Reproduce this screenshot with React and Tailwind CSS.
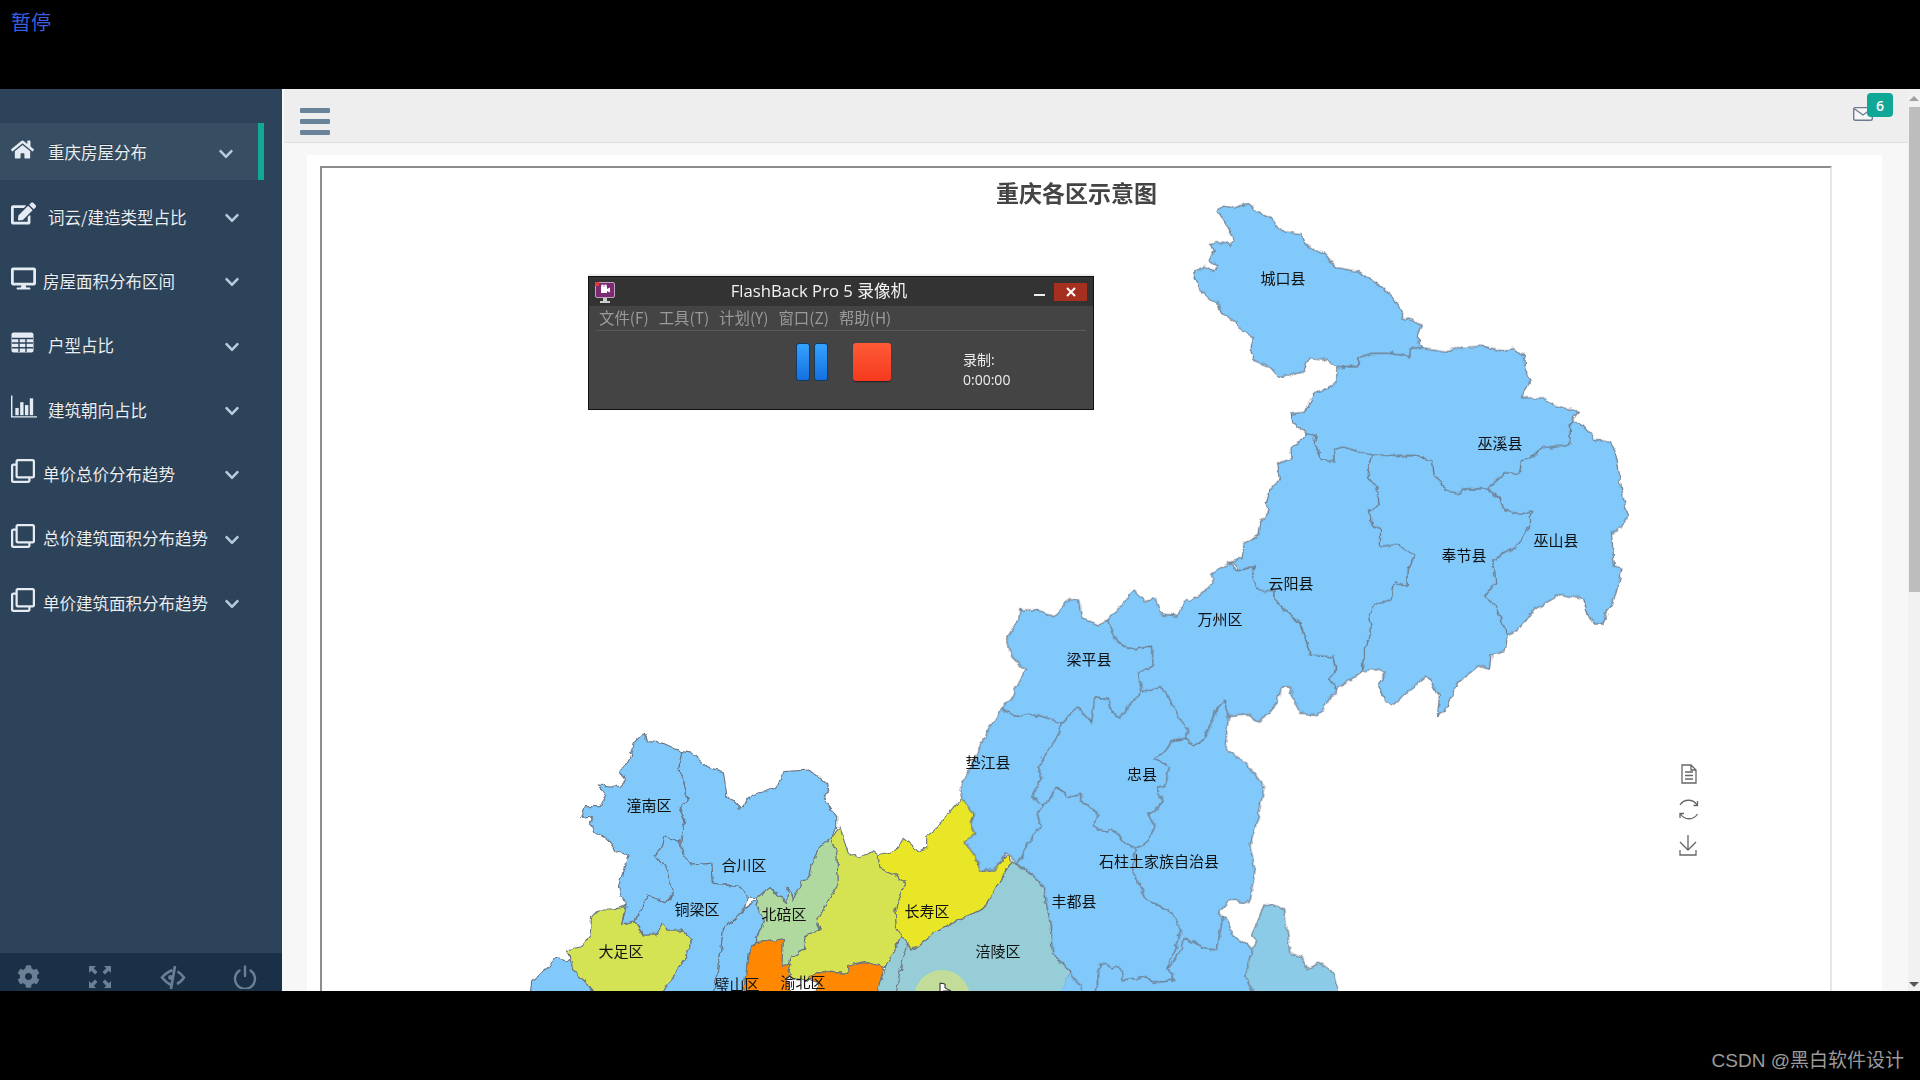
import React from "react";
import { FaHome, FaEdit, FaDesktop, FaRegClone, FaChevronDown, FaCog } from "react-icons/fa";

// Traced in 2.8x crop space
const Z5 = [
  ["#81c8fb","330,90 345,72 375,78 395,72 415,68 445,90 475,105 495,130 515,145 565,150 575,180 600,195 625,205 660,245 720,255 775,290 820,330 850,375 850,385 900,405 888,435 903,470 870,470 868,495 810,485 760,485 728,497 725,522 660,522 635,505 585,500 570,535 530,548 500,550 480,525 430,505 420,465 430,440 385,415 380,395 345,380 335,350 305,330 280,310 262,262 290,240 320,258 328,240 305,222 320,200 312,180 340,175 365,183 378,170 360,135 345,110"],
  ["#81c8fb","868,470 903,472 970,482 990,470 1075,465 1120,478 1160,472 1185,488 1190,530 1205,568 1180,610 1240,610 1270,630 1340,648 1318,678 1315,740 1240,750 1205,780 1180,785 1175,822 1135,820 1085,865 1030,865 1000,878 970,868 935,825 930,785 880,772 760,770 680,748 658,755 658,790 620,780 600,735 605,715 575,708 540,680 535,655 575,650 600,595 640,585 660,565 660,525 725,522 728,497 760,485 810,485 868,495"],
  ["#81c8fb","575,708 605,715 600,735 620,780 658,790 658,755 680,748 760,770 748,825 775,860 782,910 755,925 760,965 785,975 785,1025 835,1020 882,1050 860,1095 860,1140 825,1128 815,1175 765,1188 755,1215 760,1270 738,1320 735,1375 665,1425 640,1400 663,1370 655,1335 590,1330 560,1240 520,1205 490,1175 490,1150 445,1148 425,1105 433,1080 385,1095 380,1078 358,1072 395,1060 400,1020 445,995 450,955 472,930 465,910 475,870 505,835 497,795 535,780 535,750 560,735"],
  ["#81c8fb","760,770 880,772 930,785 935,825 970,868 1000,878 1030,865 1085,865 1120,890 1130,920 1170,935 1205,930 1205,970 1165,1025 1100,1065 1105,1130 1080,1165 1105,1190 1130,1245 1140,1275 1135,1320 1095,1330 1090,1370 1060,1360 1000,1410 965,1490 945,1500 950,1445 915,1388 870,1425 818,1472 800,1460 780,1410 800,1380 770,1370 735,1375 738,1320 760,1270 755,1215 765,1188 815,1175 825,1128 860,1140 860,1095 882,1050 835,1020 785,1025 785,975 760,965 755,925 782,910 775,860 748,825"],
  ["#81c8fb","1318,678 1345,680 1385,725 1430,735 1445,770 1455,830 1465,890 1478,940 1465,970 1432,990 1440,1080 1462,1090 1440,1170 1405,1243 1385,1243 1365,1215 1355,1175 1290,1160 1220,1200 1170,1260 1140,1275 1130,1245 1105,1190 1080,1165 1105,1130 1100,1065 1165,1025 1205,970 1205,930 1170,935 1130,920 1120,890 1085,865 1135,820 1175,822 1180,785 1205,780 1240,750 1315,740"],
];

// Traced in 3x crop space, origin (960,540)
const Z6 = [
  ["#81c8fb","330,1295 640,1290 855,1310 885,1365 300,1365", true],
  ["#81c8fb","443,240 480,200 522,152 550,185 585,172 600,220 650,228 680,175 690,185 755,135 755,105 805,70 830,95 880,78 895,145 945,150 945,179 977,211 1020,249 1052,345 1122,350 1130,388 1106,420 1132,447 1074,527 1020,522 988,441 961,441 950,490 902,546 854,522 806,527 795,480 775,495 730,600 700,618 680,595 682,570 645,510 625,470 600,440 545,455 535,400 578,375 578,322 500,328 460,290"],
  ["#81c8fb","443,240 460,290 500,328 578,322 578,375 535,400 545,455 480,530 450,515 445,475 405,472 395,548 350,503 305,550 280,540 215,520 170,532 125,505 150,480 195,390 155,350 137,300 175,240 180,210 220,210 285,230 330,175 355,180 365,235 420,255"],
  ["#81c8fb","125,505 170,532 215,520 280,540 305,550 290,590 235,680 245,710 218,770 250,795 232,820 240,860 205,910 172,978 155,950 140,940 105,990 60,990 45,950 15,905 45,880 30,850 40,820 0,770 10,720 50,650 85,570"],
  ["#81c8fb","305,550 350,503 395,548 405,472 445,475 450,515 480,530 545,455 600,440 625,470 645,510 682,570 680,595 640,600 610,640 582,655 630,680 610,740 590,745 610,785 565,825 585,860 560,910 525,925 490,905 455,865 440,880 400,860 417,825 365,785 365,760 325,770 290,740 270,775 250,795 218,770 245,710 235,680 290,590"],
  ["#81c8fb","680,595 700,618 730,600 775,495 795,480 806,527 795,625 860,670 912,740 895,830 870,915 885,990 870,1085 810,1080 775,1120 788,1130 772,1228 745,1228 675,1195 645,1260 620,1285 665,1170 630,1115 560,1080 520,1000 525,925 560,910 585,860 565,825 610,785 590,745 610,740 630,680 582,655 610,640 640,600"],
  ["#81c8fb","172,978 205,910 240,860 232,820 250,795 270,775 290,740 325,770 365,760 365,785 417,825 400,860 440,880 455,865 490,905 525,925 520,1000 560,1080 630,1115 665,1170 620,1285 640,1300 640,1320 580,1330 560,1310 490,1320 480,1285 420,1272 408,1365 375,1365 330,1295 278,1240 270,1145 250,1040 205,995"],
  ["#81c8fb","408,1365 420,1272 480,1285 490,1320 560,1310 580,1330 640,1320 640,1300 620,1285 645,1260 675,1195 745,1228 772,1228 788,1130 800,1140 820,1190 865,1215 880,1240 855,1310 885,1365"],
  ["#8ccbe8","880,1225 890,1200 875,1185 910,1100 940,1092 970,1105 980,1160 990,1240 1025,1250 1045,1290 1080,1270 1120,1300 1135,1365 885,1365 855,1310 870,1260"],
];

// Traced in 3x crop space, origin (520,720)
const Z7 = [
  ["#97cdd6","1475,425 1525,455 1570,500 1590,605 1598,700 1650,755 1625,825 1060,825 1100,740 1150,640 1175,690 1240,640 1300,610 1395,560 1420,520 1445,470"],
  ["#81c8fb","30,825 35,785 75,750 105,712 160,725 205,795 225,825"],
  ["#d3e352","315,557 305,615 345,605 370,645 405,645 425,610 440,630 485,630 515,660 500,710 420,825 225,825 205,795 160,750 140,690 185,680 210,650 215,590 235,570 280,570"],
  ["#81c8fb","370,40 385,65 430,70 485,95 475,155 490,180 505,240 480,265 495,300 485,340 480,365 435,350 425,385 405,405 440,450 460,515 440,550 385,525 345,605 305,615 318,560 295,500 325,405 290,395 265,360 225,335 210,310 220,290 185,295 195,260 240,260 260,225 235,195 300,200 315,185 300,150 325,125 340,70"],
  ["#81c8fb","485,95 515,100 560,140 610,155 620,225 660,265 695,225 770,205 790,155 870,150 920,190 925,220 910,230 950,290 950,320 935,355 900,380 880,420 870,470 850,480 820,540 805,500 800,545 780,530 750,500 710,535 685,530 655,500 580,490 575,430 515,435 485,395 485,340 495,300 480,265 505,240 490,180 475,155"],
  ["#81c8fb","435,350 480,365 485,395 515,435 575,430 580,490 655,500 685,530 675,565 610,630 600,710 580,825 420,825 500,710 515,660 485,630 440,630 425,610 405,645 370,645 345,605 385,525 440,550 460,515 440,450 405,405 425,385"],
  ["#81c8fb","710,540 675,565 610,630 600,710 580,825 670,825 685,700 705,668 730,605 720,575"],
  ["#d5e352","960,320 968,350 985,400 1015,412 1060,395 1075,405 1080,445 1125,465 1157,490 1125,570 1130,625 1150,640 1100,740 1090,740 1030,725 990,735 980,760 890,755 860,780 815,775 800,745 815,710 850,690 855,650 900,630 890,600 955,490 950,400 935,355"],
  ["#b0d99f","935,355 950,400 955,490 890,600 900,630 855,650 850,690 815,710 800,745 785,740 790,660 705,668 730,605 720,575 710,535 750,500 780,530 800,545 805,500 820,540 850,480 870,470 880,420 900,380"],
  ["#ff8800","705,668 790,660 785,740 810,735 800,770 815,825 670,825 685,700"],
  ["#ff8800","890,755 980,760 990,735 1030,725 1090,740 1070,825 880,825 895,790 860,780"],
  ["#e8e628","1325,232 1360,275 1352,305 1365,320 1362,345 1340,370 1375,410 1370,430 1395,455 1425,445 1465,405 1475,425 1445,470 1420,520 1395,560 1300,610 1240,640 1175,690 1130,625 1125,570 1157,490 1125,465 1080,445 1075,405 1130,390 1150,355 1195,395 1220,380 1220,350 1255,320 1285,280"],
];

const LABELS = [
  ["城口县",1283,279],["巫溪县",1500,444],["巫山县",1556,541],["奉节县",1464,556],["云阳县",1291,584],
  ["万州区",1220,620],["梁平县",1089,660],["垫江县",988,763],["忠县",1142,775],["石柱土家族自治县",1159,862],
  ["丰都县",1074,902],["涪陵区",998,952],["潼南区",649,806],["合川区",744,866],["铜梁区",697,910],
  ["北碚区",784,915],["长寿区",927,912],["大足区",621,952],["璧山区",737,985],["渝北区",803,983],
];

function Regions({ list, transform }) {
  return (
    <g transform={transform}>
      {list.map(([fill, p, plain], i) => (
        <polygon key={i} points={p} fill={fill} stroke={plain ? "none" : "#6a7480"} strokeWidth="1.1" strokeLinejoin="round" vectorEffect="non-scaling-stroke" />
      ))}
    </g>
  );
}

function MapChart() {
  return (
    <svg className="absolute left-[-1px] top-[-2px]" width="1510" height="825" viewBox="321 166 1510 825">
      <defs>
        <filter id="rough" x="321" y="166" width="1510" height="830" filterUnits="userSpaceOnUse">
          <feTurbulence type="fractalNoise" baseFrequency="0.13" numOctaves="2" seed="4" result="n" />
          <feDisplacementMap in="SourceGraphic" in2="n" scale="6" xChannelSelector="R" yChannelSelector="G" />
          <feGaussianBlur stdDeviation="0.35" />
        </filter>
      </defs>
      <g filter="url(#rough)">
        <Regions list={Z7} transform="translate(520 720) scale(0.33333)" />
        <Regions list={Z6} transform="translate(960 540) scale(0.33333)" />
        <Regions list={Z5} transform="translate(1100 180) scale(0.35714)" />
        <path d="M909 940 L900 970 L896 995" fill="none" stroke="#6a7480" strokeWidth="1.1" />
      </g>
      <circle cx="942" cy="998" r="28" fill="#c9df8e" opacity="0.85" />
      <path d="M940 983 L940 994 L943 991 L951 991 L945 988 L945 984 Z" fill="#fff" stroke="#222" strokeWidth="1" />
      {LABELS.map(([t, x, y]) => (
        <text key={t} x={x} y={y + 5} textAnchor="middle" fill="#111" className="text-[15px] [font-family:'Noto_Sans_CJK_SC',sans-serif]">{t}</text>
      ))}
      {/* toolbox */}
      <g fill="none" stroke="#666" strokeWidth="1.3">
        <path d="M1682 765 H1691 L1696 770 V783 H1682 Z M1691 765 V770 H1696 M1685 772 H1693 M1685 775.5 H1693 M1685 779 H1693" />
        <path d="M1680 805 A10 10 0 0 1 1697 805 M1693.5 805.5 L1697.5 805.5 L1697.5 801 M1697.5 814 A10 10 0 0 1 1680.5 814 M1684 813.5 L1680 813.5 L1680 818" />
        <path d="M1688 835 V849 M1680 842 L1688 850 L1696 842 M1680 850 V855 H1696 V850" />
      </g>
    </svg>
  );
}

const Bars = () => (
  <svg width="27" height="24" viewBox="0 0 27 24" fill="currentColor">
    <path d="M0 0h1.5v21.5H27V23H0z" />
    <rect x="4.5" y="13" width="3.5" height="7.5" /><rect x="9.5" y="7" width="3.5" height="13.5" />
    <rect x="14.5" y="10" width="3.5" height="10.5" /><rect x="19.5" y="3" width="3.5" height="17.5" />
  </svg>
);

const TableIcon = () => (
  <svg width="23" height="21" viewBox="0 0 23 21">
    <rect x="0.5" y="0.5" width="22" height="20" rx="2" fill="#e4ebf2" />
    <path d="M1 6.5 H22 M1 11 H22 M1 15.7 H22 M8 6.5 V20 M15 6.5 V20" stroke="#2d4359" strokeWidth="1.4" fill="none" />
  </svg>
);

const ITEMS = [
  { t: "重庆房屋分布", I: <FaHome size={23} />, ml: "ml-[11px]", active: true },
  { t: "词云/建造类型占比", I: <FaEdit size={25} />, ml: "ml-[11px]" },
  { t: "房屋面积分布区间", I: <FaDesktop size={25} />, ml: "ml-[6px]" },
  { t: "户型占比", I: <TableIcon />, ml: "ml-[11px]" },
  { t: "建筑朝向占比", I: <Bars />, ml: "ml-[11px]" },
  { t: "单价总价分布趋势", I: <FaRegClone size={24} />, ml: "ml-[6px]" },
  { t: "总价建筑面积分布趋势", I: <FaRegClone size={24} />, ml: "ml-[6px]" },
  { t: "单价建筑面积分布趋势", I: <FaRegClone size={24} />, ml: "ml-[6px]" },
];

function NavItem({ t, I, ml, active }) {
  return (
    <div className={active
      ? "flex h-[57px] w-[264px] items-center border-r-[6px] border-[#12a898] bg-[#374d62] pl-[11px] pr-[24px]"
      : "flex h-[57px] w-[282px] items-center pl-[11px] pr-[42px]"}>
      <span className="flex w-[26px] -translate-y-[2px] justify-start text-[#e4ebf2]">{I}</span>
      <span className={`${ml} translate-y-[1px] whitespace-nowrap text-[16.5px] text-[#e9eef3] [text-shadow:0_-1px_0_rgba(0,0,0,0.3)]`}>{t}</span>
      <FaChevronDown className="ml-auto translate-y-[2px] text-[#b9cbdc]" size={16} />
    </div>
  );
}

function Sidebar() {
  return (
    <aside className="flex w-[282px] shrink-0 flex-col overflow-hidden bg-[#2d4359] pt-[34px]">
      <nav className="flex flex-1 flex-col gap-[7.4px]">
        {ITEMS.map((it) => <NavItem key={it.t} {...it} />)}
      </nav>
      <div className="h-[38px] bg-[#1a3047]">
        <div className="-ml-[8px] grid w-[289px] grid-cols-4 items-start pt-[12px] text-[#6a8094]">
          <span className="flex justify-center"><FaCog size={23} /></span>
          <span className="flex justify-center">
            <svg width="24" height="24" viewBox="0 0 24 24" fill="currentColor">
              <path d="M1 1 H8 L5.8 3.2 L9.5 7 L7 9.5 L3.2 5.8 L1 8 Z" />
              <path d="M23 1 H16 L18.2 3.2 L14.5 7 L17 9.5 L20.8 5.8 L23 8 Z" />
              <path d="M1 23 H8 L5.8 20.8 L9.5 17 L7 14.5 L3.2 18.2 L1 16 Z" />
              <path d="M23 23 H16 L18.2 20.8 L14.5 17 L17 14.5 L20.8 18.2 L23 16 Z" />
            </svg>
          </span>
          <span className="flex justify-center">
            <svg width="26" height="24" viewBox="0 0 26 24" fill="none" stroke="currentColor" strokeWidth="2.6">
              <path d="M15 1 L11 24" />
              <path d="M12.5 5 C8 7 4 10 2 12.5 C4 15 7 18 11 20 M17.5 6.5 C20 8 22.5 10.5 24 12.5 C22.5 15 20 17.5 17 19" />
              <circle cx="10.5" cy="12.5" r="2.4" fill="currentColor" stroke="none" />
            </svg>
          </span>
          <span className="flex justify-center">
            <svg width="24" height="24" viewBox="0 0 24 24" fill="none" stroke="currentColor" strokeWidth="2.4" strokeLinecap="round">
              <path d="M12 1.5 V11" /><path d="M6.5 5.5 A10 10 0 1 0 17.5 5.5" />
            </svg>
          </span>
        </div>
      </div>
    </aside>
  );
}

function FlashBack() {
  return (
    <div className="absolute left-[306px] top-[187px] flex h-[134px] w-[506px] flex-col border border-[#111] bg-[#444444] shadow-[0_-2px_0_#eee]">
      <div className="relative flex h-[29px] shrink-0 items-center justify-center bg-[#333333] text-[16.7px] text-[#f2f2f2] [font-family:'Open_Sans','Noto_Sans_CJK_SC',sans-serif]">
        <svg className="absolute left-[6px] top-[5px]" width="20" height="22" viewBox="0 0 20 22">
          <rect x="0.5" y="0.5" width="19" height="15" rx="1.5" fill="#7c2a72" stroke="#bfa5bb" />
          <rect x="0" y="0" width="4" height="4" fill="#e23a3a" />
          <rect x="6" y="5" width="6" height="6" fill="#fff" /><path d="M12 7 L15 5.5 V10.5 L12 9Z" fill="#fff" />
          <circle cx="7.5" cy="4" r="1.4" fill="#fff" /><circle cx="10.5" cy="4" r="1.4" fill="#fff" />
          <rect x="8" y="16" width="4" height="3" fill="#ccc" /><rect x="5" y="19" width="10" height="2" fill="#ccc" />
        </svg>
        <span className="-translate-x-[22px] -translate-y-[1px]">FlashBack Pro 5 录像机</span>
        <span className="absolute left-[445px] top-[17px] h-[2px] w-[11px] bg-[#eee]" />
        <span className="absolute right-[6px] top-[6px] flex h-[18px] w-[33px] items-center justify-center bg-[#a5301f] text-[#fff]">
          <svg width="10" height="10" viewBox="0 0 10 10" stroke="#fff" strokeWidth="2"><path d="M1 1 L9 9 M9 1 L1 9" /></svg>
        </span>
      </div>
      <div className="mx-[7px] flex h-[25px] shrink-0 items-center gap-[10px] border-b border-[#5a5a5a] pl-[3px] text-[15.4px] text-[#9a9a9a] [font-family:'Noto_Sans_CJK_SC',sans-serif]">
        <span>文件(F)</span><span>工具(T)</span><span>计划(Y)</span><span>窗口(Z)</span><span>帮助(H)</span>
      </div>
      <div className="relative flex-1">
        <span className="absolute left-[207px] top-[12px] h-[38px] w-[14px] rounded-[3px] border border-[#123a66] bg-gradient-to-b from-[#35a2ff] to-[#1470e0]" />
        <span className="absolute left-[225px] top-[12px] h-[38px] w-[14px] rounded-[3px] border border-[#123a66] bg-gradient-to-b from-[#35a2ff] to-[#1470e0]" />
        <span className="absolute left-[264px] top-[12px] h-[38px] w-[38px] rounded-[3px] bg-gradient-to-b from-[#ff5a36] to-[#f5381e] shadow-[0_1px_1px_#222]" />
        <div className="absolute left-[374px] top-[19px] text-[14px] leading-[20px] text-[#eeeeee] [font-family:'Open_Sans','Noto_Sans_CJK_SC',sans-serif]">
          <div>录制:</div><div>0:00:00</div>
        </div>
      </div>
    </div>
  );
}

function Content() {
  return (
    <div className="relative flex min-w-0 flex-1 overflow-hidden">
      <div className="flex min-w-0 flex-1 flex-col bg-[#f7f7f7] pl-[2px]">
        <header className="relative flex h-[54px] shrink-0 items-start border-b border-[#dfdfdf] bg-[#eeeeee] pl-[16px] pt-[19px]">
          <div className="flex w-[30px] flex-col gap-[6px]">
            <span className="h-[5px] rounded-[1px] bg-[#6b829b]" /><span className="h-[5px] rounded-[1px] bg-[#6b829b]" /><span className="h-[5px] rounded-[1px] bg-[#6b829b]" />
          </div>
          <svg className="absolute right-[35px] top-[18px]" width="20" height="14" viewBox="0 0 20 14" fill="#f7f7f7" stroke="#6d7a90" strokeWidth="1.4">
            <rect x="0.7" y="0.7" width="18.6" height="12.6" rx="1.5" /><path d="M1 1.5 L10 8 L19 1.5" />
          </svg>
          <span className="absolute right-[15px] top-[4px] flex h-[24px] w-[26px] items-center justify-center rounded-[4px] bg-[#11a797] text-[14px] font-semibold text-white [font-family:'Open_Sans',sans-serif]">6</span>
        </header>
        <main className="ml-[23px] mr-[26px] mt-[12px] flex-1 bg-white pl-[13px] pr-[50px] pt-[11px]">
          <div className="relative h-[900px] border-l-2 border-r-2 border-t-2 border-l-[#8c8c8c] border-r-[#e6e6e6] border-t-[#8c8c8c] bg-white">
            <h1 className="relative z-10 pl-[1px] pt-[9px] text-center text-[23px] font-bold leading-[30px] text-[#444] [font-family:'Noto_Sans_CJK_SC',sans-serif]">重庆各区示意图</h1>
            <MapChart />
          </div>
        </main>
      </div>
      <div className="relative flex w-[12px] shrink-0 flex-col bg-[#f1f1f1]">
        <span className="mx-auto mt-[7px] h-0 w-0 border-x-[5px] border-b-[5px] border-x-transparent border-b-[#a0a0a0]" />
        <span className="mt-[6px] h-[485px] w-[11px] self-end bg-[#bdbdbd]" />
        <span className="mx-auto mb-[4px] mt-auto h-0 w-0 border-x-[5px] border-t-[5px] border-x-transparent border-t-[#555]" />
      </div>
      <FlashBack />
    </div>
  );
}

export default function App() {
  return (
    <div className="flex h-[1080px] w-[1920px] flex-col overflow-hidden bg-black [font-family:'Noto_Sans_CJK_SC',sans-serif]">
      <div className="h-[89px] shrink-0 pl-[11px] pt-[8px] text-[20px] leading-[28px] text-[#3b5fe0]">暂停</div>
      <div className="flex h-[902px] shrink-0 overflow-hidden">
        <Sidebar />
        <Content />
      </div>
      <div className="flex flex-1 justify-end pr-[16px] pt-[58px] text-[19px] leading-[24px] text-[#9b9b9b] [font-family:'Liberation_Sans','Noto_Sans_CJK_SC',sans-serif]">CSDN @黑白软件设计</div>
    </div>
  );
}
